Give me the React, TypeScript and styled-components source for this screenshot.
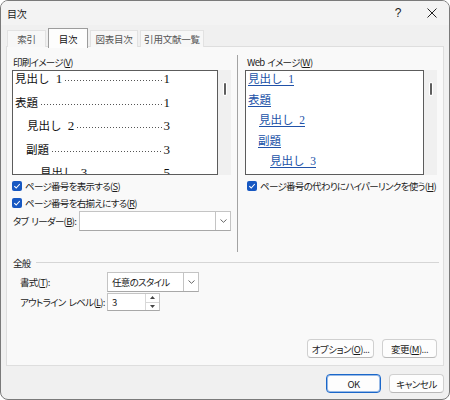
import styled, { createGlobalStyle } from 'styled-components'

const GlobalStyle = createGlobalStyle`
  html, body {
    margin: 0;
    padding: 0;
    background: #ffffff;
  }
`

const Window = styled.div`
  width: 450px;
  height: 400px;
  box-sizing: border-box;
  border: 1px solid #7a7a7a;
  border-radius: 8px;
  background: #f0f0f0;
  overflow: hidden;
  display: flex;
  flex-direction: column;
  font-family: "Noto Sans CJK JP", "Liberation Sans", sans-serif;
  font-feature-settings: "palt";
  font-size: 9.5px;
  letter-spacing: -0.7px;
  white-space: nowrap;
  color: #1b1b1b;
`

const TitleBar = styled.div`
  height: 24px;
  display: flex;
  align-items: center;
  padding-left: 6px;
  background: #f3f3f3;
  font-size: 10px;
  letter-spacing: -0.3px;
`

const TitleText = styled.span`
  flex: 1;
`

const TitleButton = styled.div`
  width: 34px;
  height: 24px;
  display: flex;
  align-items: center;
  justify-content: center;
  font-family: "Liberation Sans", sans-serif;
  font-size: 12px;
`

const TabStrip = styled.div`
  display: flex;
  align-items: flex-end;
  gap: 2px;
  height: 20px;
  margin-top: 2px;
  padding-left: 6px;
`

const Tab = styled.div<{ $active?: boolean; $w: number }>`
  width: ${p => p.$w}px;
  height: ${p => (p.$active ? 20 : 17)}px;
  box-sizing: border-box;
  display: flex;
  align-items: center;
  justify-content: center;
  border: 1px solid ${p => (p.$active ? '#9c9c9c' : '#e2e2e2')};
  border-bottom: none;
  background: ${p => (p.$active ? '#fdfdfd' : '#f7f7f7')};
  color: ${p => (p.$active ? '#111' : '#555')};
  letter-spacing: -0.2px;
  position: relative;
  z-index: ${p => (p.$active ? 1 : 0)};
  margin-bottom: ${p => (p.$active ? -1 : 0)}px;
`

const Panel = styled.div`
  margin: -1px 5px 0 5px;
  height: 320px;
  box-sizing: border-box;
  border: 1px solid #dedede;
  background: #f9f9f9;
  display: flex;
  flex-direction: column;
  padding: 8px 4px 7px 5px;
`

const TopArea = styled.div`
  display: grid;
  grid-template-columns: 220px 1fr;
  height: 197px;
`

const LeftCol = styled.div`
  display: flex;
  flex-direction: column;
`

const RightCol = styled.div`
  display: flex;
  flex-direction: column;
  margin-left: 5px;
  padding-left: 7px;
  border-left: 1px solid #a3a3a3;
`

const Label = styled.div<{ $indent?: number }>`
  height: 14px;
  line-height: 14px;
  padding-left: ${p => p.$indent ?? 1}px;
`

const PreviewRow = styled.div`
  display: flex;
  margin-top: 1px;
  height: 105px;
`

const PreviewBox = styled.div<{ $w: number }>`
  width: ${p => p.$w}px;
  box-sizing: border-box;
  border: 1px solid #5c5c5c;
  background: #ffffff;
  overflow: hidden;
  font-family: "Liberation Serif", "Noto Sans CJK JP", serif;
  font-feature-settings: normal;
  letter-spacing: 0;
  font-size: 11.5px;
  color: #111;
`

const Track = styled.div`
  width: 13px;
  background: #f0f0f0;
  position: relative;
`

const Thumb = styled.div`
  position: absolute;
  left: 6px;
  top: 13px;
  width: 2px;
  height: 12px;
  border-radius: 1px;
  background: #5e5e5e;
  box-shadow: 0 0 0 1px #ffffff;
`

const TocRow = styled.div<{ $indent: number }>`
  display: flex;
  width: 157px;
  box-sizing: border-box;
  height: 16px;
  line-height: 16px;
  margin-bottom: 7.5px;
  padding-left: ${p => p.$indent}px;
  white-space: pre;
`

const Num = styled.span`
  font-size: 13px;
`

const Leader = styled.span`
  flex: 1;
  margin: 0 1px 0 3px;
  background-image: linear-gradient(to right, #555 1px, transparent 1px);
  background-size: 3px 1px;
  background-repeat: repeat-x;
  background-position: 0 9px;
`

const LinkRow = styled.div<{ $indent: number }>`
  height: 16px;
  line-height: 16px;
  margin-bottom: 4.5px;
  padding-left: ${p => p.$indent}px;
  white-space: pre;
`

const WebLink = styled.span`
  color: #2152a8;
  text-decoration: underline;
  text-underline-offset: 2px;
`

const CheckRow = styled.div<{ $first?: boolean; $indent?: number }>`
  display: flex;
  align-items: center;
  height: 17px;
  margin-top: ${p => (p.$first ? 2 : 0)}px;
  padding-left: ${p => p.$indent ?? 0}px;
`

const CheckBox = styled.span`
  flex: none;
  width: 10px;
  height: 10px;
  border-radius: 2px;
  background: #1758c2;
  margin-right: 3px;
  display: flex;
  align-items: center;
  justify-content: center;
`

const LeaderRow = styled.div`
  display: flex;
  align-items: center;
  justify-content: space-between;
  height: 20px;
  padding-left: 1px;
  padding-right: 1px;
`

const Gap = styled.span`
  display: inline-block;
  width: 3px;
`

const Select = styled.div<{ $w: number }>`
  width: ${p => p.$w}px;
  height: 20px;
  box-sizing: border-box;
  border: 1px solid #c4c4c4;
  border-bottom-color: #a8a8a8;
  background: #ffffff;
  display: flex;
  align-items: center;
`

const SelectText = styled.span`
  flex: 1;
  padding-left: 4px;
`

const ArrowCell = styled.span`
  width: 14px;
  height: 100%;
  border-left: 1px solid #c4c4c4;
  display: flex;
  align-items: center;
  justify-content: center;
`

const GroupHeader = styled.div`
  display: flex;
  align-items: center;
  height: 14px;
  margin-top: 4px;
  padding-left: 1px;
`

const GroupLine = styled.span`
  flex: 1;
  height: 1px;
  background: #d6d6d6;
  margin-left: 5px;
  margin-top: -2px;
`

const FormGrid = styled.div`
  display: grid;
  grid-template-columns: 87px auto;
  grid-auto-rows: min-content;
  row-gap: 1px;
  margin-top: 2px;
  padding-left: 8px;
  align-items: center;
  justify-items: start;
`

const Spin = styled.div`
  width: 53px;
  height: 18px;
  box-sizing: border-box;
  border: 1px solid #c4c4c4;
  border-bottom-color: #a8a8a8;
  background: #ffffff;
  display: flex;
  align-items: center;
`

const SpinButtons = styled.span`
  width: 13px;
  height: 100%;
  display: flex;
  flex-direction: column;
  border-left: 1px solid #d8d8d8;
`

const SpinHalf = styled.span<{ $top?: boolean }>`
  flex: 1;
  display: flex;
  align-items: center;
  justify-content: center;
  border-bottom: ${p => (p.$top ? '1px solid #d8d8d8' : 'none')};
`

const ButtonRow = styled.div`
  display: flex;
  justify-content: flex-end;
  gap: 8px;
  margin-top: auto;
  padding-right: 2px;
`

const Button = styled.button<{ $w: number; $primary?: boolean }>`
  width: ${p => p.$w}px;
  height: 19px;
  box-sizing: border-box;
  padding: 0;
  border: 1px solid ${p => (p.$primary ? '#1a67c9' : '#d0d0d0')};
  border-bottom-color: ${p => (p.$primary ? '#1a67c9' : '#b8b8b8')};
  box-shadow: ${p => (p.$primary ? 'inset 0 0 0 1px rgba(26,103,201,0.45)' : 'none')};
  border-radius: 4px;
  background: #fdfdfd;
  font-family: inherit;
  font-feature-settings: inherit;
  font-size: 9.5px;
  letter-spacing: -0.5px;
  white-space: nowrap;
  color: #1b1b1b;
`

const Footer = styled.div`
  display: flex;
  justify-content: flex-end;
  gap: 8px;
  margin-top: 8px;
  padding-right: 5px;
`

const Check = () => (
  <CheckBox>
    <svg width="8" height="8" viewBox="0 0 8 8">
      <path d="M1.3 4.2 L3.2 6 L6.8 2" fill="none" stroke="#fff" strokeWidth="1.1" />
    </svg>
  </CheckBox>
)

const Chevron = () => (
  <svg width="7" height="4" viewBox="0 0 7 4">
    <path d="M0.5 0.5 L3.5 3.3 L6.5 0.5" fill="none" stroke="#555" strokeWidth="0.9" />
  </svg>
)

const printRows = [
  { title: '見出し ', num: '1', page: '1', indent: 2 },
  { title: '表題', num: '', page: '1', indent: 2 },
  { title: '見出し ', num: '2', page: '3', indent: 14 },
  { title: '副題', num: '', page: '3', indent: 13 },
  { title: '見出し ', num: '3', page: '5', indent: 27 },
]

const webRows = [
  { title: '見出し  1', indent: 2 },
  { title: '表題', indent: 2 },
  { title: '見出し  2', indent: 13 },
  { title: '副題', indent: 12 },
  { title: '見出し  3', indent: 24 },
]

export default function App() {
  return (
    <>
      <GlobalStyle />
      <Window>
        <TitleBar>
          <TitleText>目次</TitleText>
          <TitleButton>?</TitleButton>
          <TitleButton>
            <svg width="10" height="10" viewBox="0 0 10 10">
              <path d="M0.5 0.5 L9.5 9.5 M9.5 0.5 L0.5 9.5" stroke="#222" strokeWidth="1" />
            </svg>
          </TitleButton>
        </TitleBar>

        <TabStrip>
          <Tab $w={39}>索引</Tab>
          <Tab $w={40} $active>目次</Tab>
          <Tab $w={48}>図表目次</Tab>
          <Tab $w={64}>引用文献一覧</Tab>
        </TabStrip>

        <Panel>
          <TopArea>
            <LeftCol>
              <Label>印刷イメージ(<u>V</u>)</Label>
              <PreviewRow>
                <PreviewBox $w={206}>
                  {printRows.map(r => (
                    <TocRow key={r.title + r.indent} $indent={r.indent}>
                      <span>
                        {r.title}
                        {r.num && <Num> {r.num}</Num>}
                      </span>
                      <Leader />
                      <Num>{r.page}</Num>
                    </TocRow>
                  ))}
                </PreviewBox>
                <Track>
                  <Thumb />
                </Track>
              </PreviewRow>
              <CheckRow $first>
                <Check />
                <span>ページ番号を表示する(<u>S</u>)</span>
              </CheckRow>
              <CheckRow>
                <Check />
                <span>ページ番号を右揃えにする(<u>R</u>)</span>
              </CheckRow>
              <LeaderRow>
                <span>タブ<Gap />リーダー(<u>B</u>):</span>
                <Select $w={152}>
                  <SelectText />
                  <ArrowCell>
                    <Chevron />
                  </ArrowCell>
                </Select>
              </LeaderRow>
            </LeftCol>

            <RightCol>
              <Label $indent={2}>Web<Gap />イメージ(<u>W</u>)</Label>
              <PreviewRow>
                <PreviewBox $w={179}>
                  {webRows.map(r => (
                    <LinkRow key={r.title + r.indent} $indent={r.indent}>
                      <WebLink>{r.title}</WebLink>
                    </LinkRow>
                  ))}
                </PreviewBox>
                <Track>
                  <Thumb />
                </Track>
              </PreviewRow>
              <CheckRow $first $indent={2}>
                <Check />
                <span>ページ番号の代わりにハイパーリンクを使う(<u>H</u>)</span>
              </CheckRow>
            </RightCol>
          </TopArea>

          <GroupHeader>
            <span>全般</span>
            <GroupLine />
          </GroupHeader>
          <FormGrid>
            <span>書式(<u>T</u>):</span>
            <Select $w={92}>
              <SelectText>任意のスタイル</SelectText>
              <ArrowCell>
                <Chevron />
              </ArrowCell>
            </Select>
            <span>アウトライン<Gap />レベル(<u>L</u>):</span>
            <Spin>
              <SelectText>3</SelectText>
              <SpinButtons>
                <SpinHalf $top>
                  <svg width="5" height="3" viewBox="0 0 5 3">
                    <path d="M0 3 L2.5 0 L5 3 Z" fill="#444" />
                  </svg>
                </SpinHalf>
                <SpinHalf>
                  <svg width="5" height="3" viewBox="0 0 5 3">
                    <path d="M0 0 L2.5 3 L5 0 Z" fill="#444" />
                  </svg>
                </SpinHalf>
              </SpinButtons>
            </Spin>
          </FormGrid>

          <ButtonRow>
            <Button $w={67}>オプション(<u>O</u>)...</Button>
            <Button $w={55}>変更(<u>M</u>)...</Button>
          </ButtonRow>
        </Panel>

        <Footer>
          <Button $w={55} $primary>OK</Button>
          <Button $w={55}>キャンセル</Button>
        </Footer>
      </Window>
    </>
  )
}
